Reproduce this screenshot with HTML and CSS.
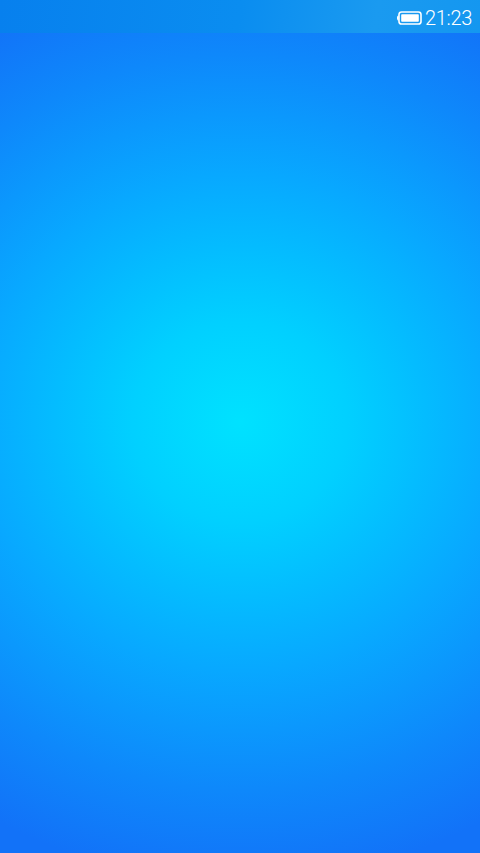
FILE: index.html
```html
<!DOCTYPE html>
<html lang="en">
<head>
<meta charset="utf-8">
<title>Screen</title>
<link rel="stylesheet" href="styles.css">
</head>
<body>
<div class="screen">
  <header class="status-bar">
    <svg class="battery" width="26" height="14" viewBox="0 0 26 14">
      <path class="battery-cap" d="M2.600 4.200 C1.400 4.600 1 5.400 1 7 C1 8.600 1.400 9.400 2.600 9.800 Z"/>
      <rect class="battery-shell" x="3" y="1" width="22" height="12" rx="2.600"/>
      <rect class="battery-fill" x="5.200" y="3.200" width="17.600" height="7.600" rx="0.800"/>
    </svg>
    <span class="clock">21:23</span>
  </header>
</div>
</body>
</html>
```
FILE: styles.css
```css
html, body {
  margin: 0;
  padding: 0;
}
.screen {
  width: 480px;
  height: 853px;
  overflow: hidden;
  background: radial-gradient(ellipse 490px 460px at 240px 422px, #00e2ff 0%, #01d0ff 22%, #04bcff 38%, #08a8ff 54%, #0e88fb 80%, #1272f8 100%);
}
.status-bar {
  height: 33px;
  box-sizing: border-box;
  display: flex;
  align-items: center;
  justify-content: flex-end;
  gap: 3px;
  padding: 2px 8px 0 0;
  background: linear-gradient(100deg, #0780ee 0%, #0a8df0 50%, #1a9af0 78%, #1497f0 100%);
}
.battery {
  display: block;
}
.battery-cap {
  fill: #ffffff;
}
.battery-shell {
  fill: none;
  stroke: #ffffff;
  stroke-width: 1.600;
}
.battery-fill {
  fill: #ffffff;
}
.clock {
  font-family: Roboto, "Liberation Sans", Arial, sans-serif;
  font-size: 20px;
  line-height: 24px;
  letter-spacing: -0.3px;
  color: #ffffff;
  font-weight: 300;
}
```
